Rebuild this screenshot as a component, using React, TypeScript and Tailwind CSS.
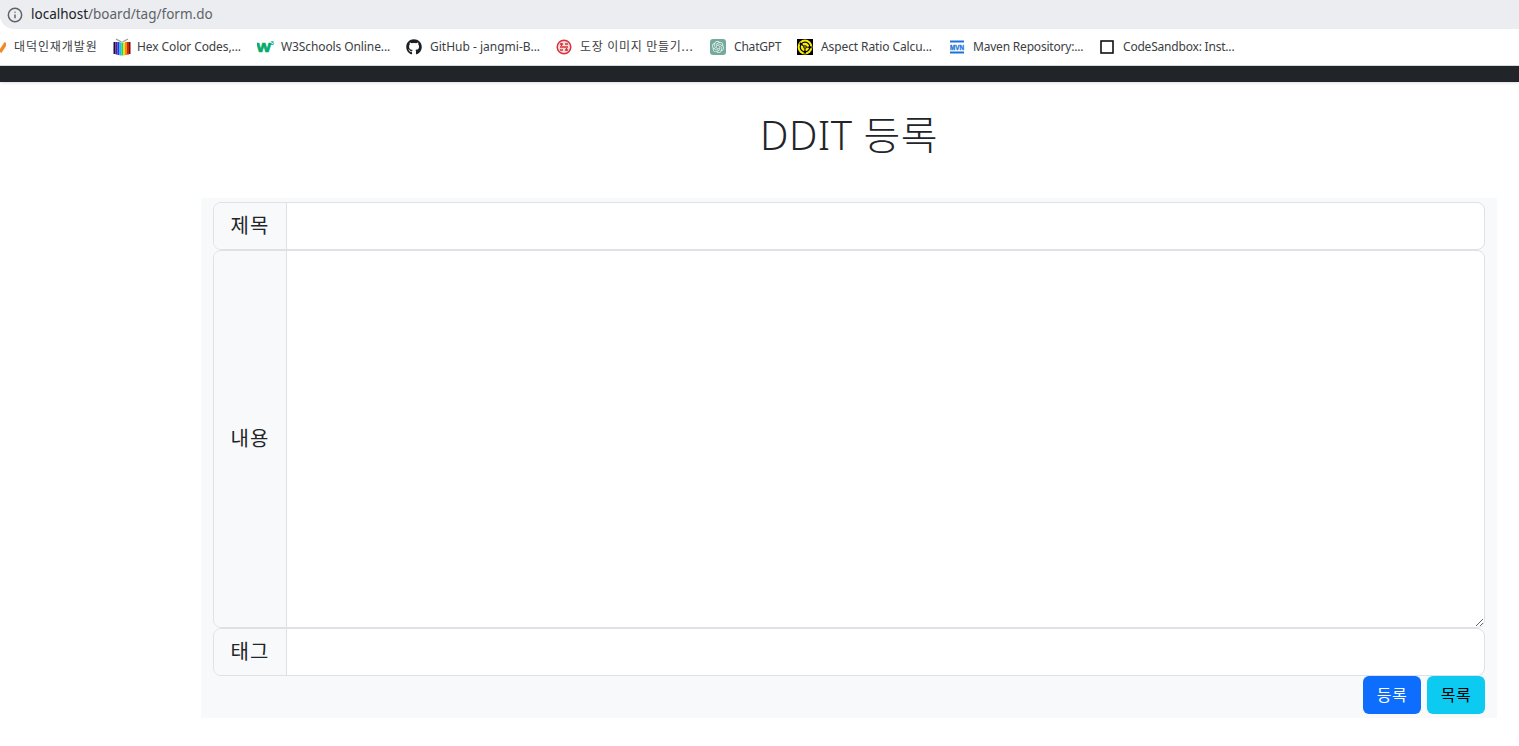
import { Info } from "lucide-react";
import { FaGithub } from "react-icons/fa";
import { SiOpenai } from "react-icons/si";

function CheckIcon() {
  return (
    <svg width="16" height="16" viewBox="0 0 16 16">
      <path d="M10 13 L16 4" stroke="#f08a24" strokeWidth="3.4" fill="none" />
    </svg>
  );
}

function BookIcon() {
  return (
    <svg width="18" height="18" viewBox="0 0 18 18" className="shrink-0">
      <path d="M3 1 L8.5 4 M15 1 L9.5 4" stroke="#9a9a9a" strokeWidth="1.4" fill="none" />
      <rect x="0.5" y="4" width="2" height="12" fill="#1a1040" />
      <rect x="2.5" y="4" width="2" height="12.5" fill="#5a1aa8" />
      <rect x="4.5" y="4" width="2" height="13" fill="#1c3ce0" />
      <rect x="6.5" y="4.5" width="2" height="13" fill="#18c0f0" />
      <rect x="8.5" y="4.5" width="1.5" height="13" fill="#30d050" />
      <rect x="10" y="4.5" width="2" height="13" fill="#e8e020" />
      <rect x="12" y="4" width="2" height="13" fill="#f08a14" />
      <rect x="14" y="4" width="2" height="12.5" fill="#e02010" />
      <rect x="16" y="4" width="1.5" height="12" fill="#701008" />
    </svg>
  );
}

function W3Icon() {
  return (
    <svg width="18" height="16" viewBox="0 0 18 16" className="shrink-0">
      <text x="-0.5" y="13" textLength="14.5" lengthAdjust="spacingAndGlyphs" fontFamily="Liberation Sans, sans-serif" fontSize="13" fontWeight="700" fill="#04aa6d" stroke="#04aa6d" strokeWidth="0.7">
        W
      </text>
      <text x="13.5" y="6" fontFamily="Liberation Sans, sans-serif" fontSize="6" fontWeight="700" fill="#04aa6d">
        3
      </text>
    </svg>
  );
}

function StampIcon() {
  return (
    <svg width="16" height="16" viewBox="0 0 16 16">
      <circle cx="8" cy="8" r="6.8" fill="#f8dcdc" stroke="#d8333a" strokeWidth="1.5" />
      <path d="M4 5 H7 M9 5 H12 M4 8 H12 M4 11 H7 M9 11 H12 M5.5 4 V7 M10.5 9 V12" stroke="#d8333a" strokeWidth="1.3" />
    </svg>
  );
}

function GptIcon() {
  return (
    <span className="flex h-4 w-4 items-center justify-center rounded-[3px] bg-[#74aa9c]">
      <SiOpenai size={12} color="#e8f3f0" />
    </span>
  );
}

function RecordIcon() {
  return (
    <svg width="16" height="16" viewBox="0 0 16 16">
      <rect width="16" height="16" fill="#000000" />
      <circle cx="8" cy="8" r="7.4" fill="#f8ea10" />
      <circle cx="8" cy="8" r="4.8" fill="none" stroke="#000000" strokeWidth="1.2" />
      <path d="M8 8 L3.6 3.2 L2.2 5.2 Z M8 8 L14.8 7.2 L14.4 9.6 Z M8 8 L6.6 14.6 L9.2 14.6 Z" fill="#000000" />
      <circle cx="8" cy="8" r="1.8" fill="#000000" />
      <circle cx="8" cy="8" r="0.8" fill="#f8ea10" />
    </svg>
  );
}

function MavenIcon() {
  return (
    <svg width="16" height="16" viewBox="0 0 16 16">
      <rect x="1" y="1.5" width="14" height="2" fill="#1a73d8" />
      <text x="1" y="11" textLength="14" lengthAdjust="spacingAndGlyphs" fontFamily="Liberation Sans, sans-serif" fontSize="7" fontWeight="700" fill="#1a73d8" stroke="#1a73d8" strokeWidth="0.3">
        MVN
      </text>
      <rect x="1" y="12.5" width="14" height="2" fill="#1a73d8" />
    </svg>
  );
}

function BoxIcon() {
  return (
    <svg width="16" height="16" viewBox="0 0 16 16">
      <rect x="2" y="2" width="12" height="12" fill="#ffffff" stroke="#111111" strokeWidth="1.6" />
    </svg>
  );
}

const bookmarks = [
  { label: "대덕인재개발원", icon: <CheckIcon />, text: "w-[83px] tracking-[0.9px]" },
  { label: "Hex Color Codes,...", icon: <BookIcon />, text: "w-[104px] tracking-[-0.1px]" },
  { label: "W3Schools Online...", icon: <W3Icon />, text: "w-[109px] tracking-[-0.1px]" },
  { label: "GitHub - jangmi-B...", icon: <FaGithub size={16} color="#1b1f23" />, text: "w-[110px]" },
  { label: "도장 이미지 만들기...", icon: <StampIcon />, text: "w-[114px] tracking-[0.7px]" },
  { label: "ChatGPT", icon: <GptIcon />, text: "w-[47px] tracking-[-0.2px]" },
  { label: "Aspect Ratio Calcu...", icon: <RecordIcon />, text: "w-[112px] tracking-[-0.1px]" },
  { label: "Maven Repository:...", icon: <MavenIcon />, text: "w-[110px] tracking-[-0.2px]" },
  { label: "CodeSandbox: Inst...", icon: <BoxIcon />, text: "w-[111px] tracking-[-0.2px]" },
];

function Label({ children }: { children: string }) {
  return (
    <div className="flex w-[73px] shrink-0 items-center justify-center border-r border-[#dee2e6] bg-[#f8f9fa] text-[20px] tracking-[1px] text-[#212529]">
      {children}
    </div>
  );
}

export default function App() {
  return (
    <div className="min-h-[746px] overflow-hidden bg-white font-['Noto_Sans','Noto_Sans_CJK_KR',sans-serif]">
      <div className="flex h-[29px] items-center gap-[8px] rounded-bl-[14px] bg-[#ebedf0] pl-[7px] text-[13.5px] text-[#5f6368]">
        <Info size={16} color="#5f6368" strokeWidth={2.2} />
        <div>
          <span className="text-[#202124]">localhost</span>/board/tag/form.do
        </div>
      </div>

      <div className="-ml-[10px] flex h-[37px] items-center gap-[16px] border-b border-[#dadce0] text-[12px] text-[#3c4043]">
        {bookmarks.map((b) => (
          <div key={b.label} className="flex items-center gap-[8px]">
            <span className="flex h-4 w-4 items-center justify-start">{b.icon}</span>
            <span className={`${b.text} whitespace-nowrap`}>{b.label}</span>
          </div>
        ))}
      </div>

      <div className="h-4 bg-[#212529] shadow-sm" />

      <main className="ml-[201px] w-[1296px]">
        <h1 className="mt-[29px] mb-[39px] text-center text-[40px] leading-[48px] font-light tracking-[0.5px] text-[#212529]">
          DDIT 등록
        </h1>

        <form className="bg-[#f8f9fa] px-3 py-1">
          <div className="flex h-12 overflow-hidden rounded-lg border border-[#dee2e6] bg-white">
            <Label>제목</Label>
            <input type="text" className="min-w-0 flex-1 px-4 text-[20px] outline-none" />
          </div>
          <div className="flex h-[378px] overflow-hidden rounded-lg border border-[#dee2e6] bg-white">
            <Label>내용</Label>
            <textarea className="min-w-0 flex-1 px-4 py-2 text-[20px] outline-none" />
          </div>
          <div className="flex h-12 overflow-hidden rounded-lg border border-[#dee2e6] bg-white">
            <Label>태그</Label>
            <input type="text" className="min-w-0 flex-1 px-4 text-[20px] outline-none" />
          </div>
          <div className="flex justify-end gap-[6px]">
            <button type="button" className="h-[38px] w-[58px] rounded-md bg-[#0d6efd] text-[16px] tracking-[0.5px] text-white">
              등록
            </button>
            <button type="button" className="h-[38px] w-[58px] rounded-md bg-[#0dcaf0] text-[16px] tracking-[0.5px] text-black">
              목록
            </button>
          </div>
        </form>
      </main>
    </div>
  );
}
